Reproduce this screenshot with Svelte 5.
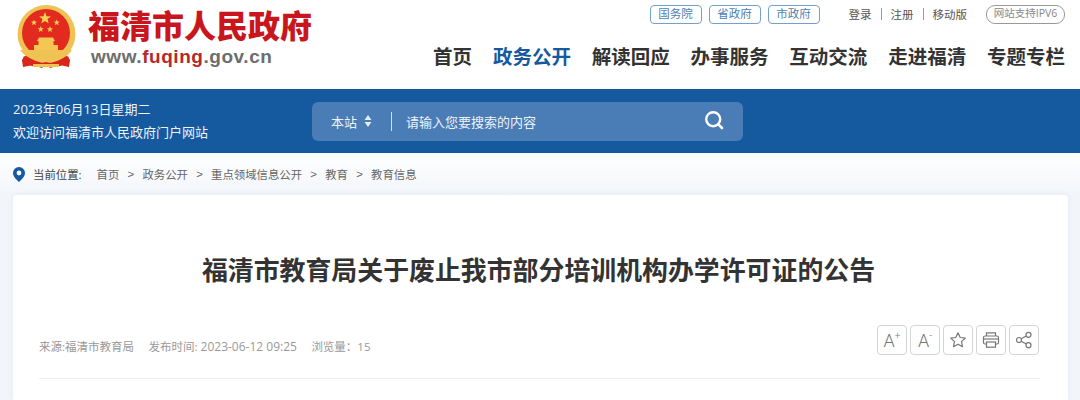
<script>
	const links = ['国务院', '省政府', '市政府'];
	const nav = ['首页', '政务公开', '解读回应', '办事服务', '互动交流', '走进福清', '专题专栏'];
	const crumbs = ['首页', '政务公开', '重点领域信息公开', '教育', '教育信息'];
	// emblem drawn in page pixels, see the viewBox below
	const smallStars = [
		[34, 22.7],
		[56.7, 22.7],
		[40.7, 29.3],
		[50, 29.3]
	];

	function star(cx, cy, r) {
		const pts = [];
		for (let i = 0; i < 10; i++) {
			const rad = i % 2 ? r * 0.42 : r;
			const a = (Math.PI / 5) * i - Math.PI / 2;
			pts.push(`${(cx + rad * Math.cos(a)).toFixed(2)},${(cy + rad * Math.sin(a)).toFixed(2)}`);
		}
		return pts.join(' ');
	}
</script>

<div class="page">
	<header class="top">
		<div class="brand">
			<svg class="emblem" viewBox="14 4 66 66" width="66" height="66" aria-hidden="true">
				<path d="M27 54 L22 60 L23 67 L33 65 L42 68 L46 64 L50 68 L60 65 L69 67 L70 60 L65 54 Z" fill="#d8261c" />
				<circle cx="46.5" cy="34" r="29" fill="#eec353" />
				<circle cx="46" cy="33" r="24" fill="#e22a1f" />
				<polygon points={star(45, 18.3, 6.2)} fill="#f6d250" />
				{#each smallStars as s}
					<polygon points={star(s[0], s[1], 3.2)} fill="#f6d250" />
				{/each}
				<path d="M37 41 L39 37.5 H53 L55 41 H53.5 V45 H58 V50 H34 V45 H38.5 V41 Z" fill="#f3c751" />
				<path d="M20 50 H72 Q66 60 46.5 63 Q27 60 20 50 Z" fill="#eec353" />
				<path d="M24 56 Q36 66 46 62 Q56 66 68 56 L70 61 Q58 70 46 65 Q34 70 22 61 Z" fill="#d8261c" />
				<rect x="33" y="64" width="26" height="3" fill="#eec353" />
			</svg>
			<div class="brand-text">
				<div class="brand-name">福清市人民政府</div>
				<div class="brand-url">www.<b>fuqing</b>.gov.cn</div>
			</div>
		</div>
		<div class="top-right">
			<div class="utility">
				<div class="gov-links">
					{#each links as l}
						<a href="#top" class="gov">{l}</a>
					{/each}
				</div>
				<div class="account">
					<a href="#top">登录</a>
					<i></i>
					<a href="#top">注册</a>
					<i></i>
					<a href="#top">移动版</a>
				</div>
				<span class="ipv6">网站支持IPV6</span>
			</div>
			<nav class="nav">
				{#each nav as item, i}
					<a href="#top" class:active={i === 1}>{item}</a>
				{/each}
			</nav>
		</div>
	</header>

	<section class="band">
		<div class="welcome">
			<div>2023年06月13日星期二</div>
			<div>欢迎访问福清市人民政府门户网站</div>
		</div>
		<div class="search">
			<span class="scope">本站</span>
			<svg class="updown" viewBox="0 0 8 12" width="8" height="12" aria-hidden="true">
				<path d="M4 0 L7.5 5 H0.5 Z M4 12 L0.5 7 H7.5 Z" fill="#e6edf5" />
			</svg>
			<span class="sep"></span>
			<span class="hint">请输入您要搜索的内容</span>
			<svg class="lens" viewBox="0 0 20 20" width="20" height="20" aria-hidden="true">
				<circle cx="9.2" cy="9.2" r="7" fill="none" stroke="#fff" stroke-width="2.4" />
				<path d="M14.4 14.4 L18 18" stroke="#fff" stroke-width="2.6" stroke-linecap="round" />
			</svg>
		</div>
	</section>

	<div class="crumbs">
		<svg viewBox="0 0 12 15" width="12" height="15" aria-hidden="true">
			<path
				fill-rule="evenodd"
				d="M6 0 A6 6 0 0 1 12 6 C12 10 8 13 6 15 C4 13 0 10 0 6 A6 6 0 0 1 6 0 Z M6 3.6 A2.4 2.4 0 1 0 6 8.4 A2.4 2.4 0 1 0 6 3.6 Z"
				fill="#15599f"
			/>
		</svg>
		<span class="here">当前位置:</span>
		{#each crumbs as c, i}
			{#if i > 0}<span class="arrow">&gt;</span>{/if}
			<a href="#top">{c}</a>
		{/each}
	</div>

	<main class="card">
		<h1>福清市教育局关于废止我市部分培训机构办学许可证的公告</h1>
		<div class="meta">
			<div class="info">
				<span>来源:福清市教育局</span>
				<span>发布时间: <span class="stamp">2023-06-12 09:25</span></span>
				<span>浏览量：15</span>
			</div>
			<div class="tools">
				<button aria-label="放大字体"><span class="aa">A</span><sup>+</sup></button>
				<button aria-label="缩小字体"><span class="aa">A</span><sup>-</sup></button>
				<button aria-label="收藏">
					<svg viewBox="0 0 18 18" width="18" height="18">
						<path
							d="M9 1.8 L11.2 6.5 L16.3 7.1 L12.5 10.6 L13.5 15.7 L9 13.2 L4.5 15.7 L5.5 10.6 L1.7 7.1 L6.8 6.5 Z"
							fill="none"
							stroke="#777"
							stroke-width="1.2"
							stroke-linejoin="round"
						/>
					</svg>
				</button>
				<button aria-label="打印">
					<svg viewBox="0 0 18 18" width="18" height="18" fill="none" stroke="#777" stroke-width="1.2">
						<path d="M4.5 5 V1.8 H13.5 V5" />
						<rect x="1.5" y="5" width="15" height="8" rx="1.5" />
						<path d="M1.5 8 H16.5" />
						<rect x="4.5" y="11" width="9" height="5.2" fill="#fff" />
					</svg>
				</button>
				<button aria-label="分享">
					<svg viewBox="0 0 18 18" width="18" height="18" fill="none" stroke="#777" stroke-width="1.2">
						<circle cx="4" cy="9" r="2.5" />
						<circle cx="13.5" cy="3.8" r="2.5" />
						<circle cx="13.5" cy="14.2" r="2.5" />
						<path d="M6.2 7.8 L11.3 5 M6.2 10.2 L11.3 13" />
					</svg>
				</button>
			</div>
		</div>
	</main>
</div>

<style>
	:global(body) {
		margin: 0;
		background: #fff;
	}
	.page {
		height: 400px;
		overflow: hidden;
		font-family: 'Open Sans', 'Noto Sans CJK SC', sans-serif;
		background: linear-gradient(#fff 153px, #f2f5fa 195px);
	}
	a {
		color: inherit;
		text-decoration: none;
	}

	.top {
		height: 89px;
		display: flex;
		justify-content: space-between;
		background: #fff;
	}
	.brand {
		display: flex;
		align-items: flex-start;
		padding: 4px 0 0 14px;
		gap: 8px;
	}
	.brand-text {
		padding-top: 2px;
	}
	.brand-name {
		font-size: 32px;
		line-height: 40px;
		font-weight: 900;
		color: #c9161d;
		width: 224px;
		white-space: nowrap;
	}
	.brand-url {
		font-family: 'Liberation Sans', sans-serif;
		font-size: 19px;
		line-height: 22px;
		font-weight: 700;
		letter-spacing: 0.55px;
		color: #6d6d6d;
		padding: 0 0 0 3px;
	}
	.brand-url b {
		color: #b32a2b;
	}

	.top-right {
		display: flex;
		flex-direction: column;
		align-items: flex-end;
		padding-right: 15px;
	}
	.utility {
		display: flex;
		align-items: center;
		height: 28px;
		font-size: 11.5px;
	}
	.gov-links {
		display: flex;
		gap: 7px;
		margin-right: 29px;
	}
	.gov {
		width: 50px;
		height: 17px;
		line-height: 15px;
		text-align: center;
		border: 1px solid #74a0cd;
		border-radius: 4px;
		color: #4f7fb3;
		font-size: 11.5px;
	}
	.account {
		display: flex;
		align-items: center;
		gap: 9px;
		color: #555;
		margin-right: 19px;
	}
	.account i {
		width: 1px;
		height: 12px;
		background: #cf9140;
	}
	.ipv6 {
		width: 77px;
		height: 17px;
		line-height: 15px;
		text-align: center;
		border: 1px solid #999;
		border-radius: 9px;
		color: #888;
		font-size: 10.5px;
		white-space: nowrap;
	}
	.nav {
		display: flex;
		gap: 20.8px;
		margin-top: 14px;
		font-size: 19.5px;
		line-height: 30px;
		font-weight: 700;
		color: #333;
		white-space: nowrap;
	}
	.nav .active {
		color: #15599f;
	}

	.band {
		height: 64px;
		background: #15599f;
		display: flex;
		align-items: center;
		padding-left: 13px;
		color: #fff;
	}
	.welcome {
		width: 299px;
		font-size: 13px;
		line-height: 23px;
		color: #eef3f9;
	}
	.search {
		width: 431px;
		height: 39px;
		box-sizing: border-box;
		background: #4a7cb5;
		border-radius: 6px;
		display: flex;
		align-items: center;
		padding: 0 19px;
		font-size: 13px;
		color: #eef3f9;
	}
	.updown {
		margin-left: 7px;
	}
	.sep {
		width: 1px;
		height: 19px;
		background: #d5e0ed;
		margin: 0 14px 0 19px;
	}
	.hint {
		flex: 1;
	}
	.lens {
		margin-top: -2px;
	}

	.crumbs {
		height: 42px;
		display: flex;
		align-items: center;
		padding-left: 13px;
		font-size: 11.4px;
		color: #666;
		box-sizing: border-box;
	}
	.here {
		margin: 0 15px 0 8px;
		color: #444;
	}
	.arrow {
		margin: 0 8.2px;
		font-family: 'Liberation Sans', sans-serif;
	}

	.card {
		margin: 0 12px 0 13px;
		height: 205px;
		box-sizing: border-box;
		background: #fff;
		padding: 0 28px 0 26px;
		border-radius: 4px 4px 0 0;
		box-shadow: 0 0 6px rgba(40, 80, 140, 0.06);
	}
	h1 {
		margin: 0;
		padding-top: 56px;
		font-size: 25.9px;
		line-height: 38px;
		font-weight: 700;
		color: #333;
		text-align: center;
		text-indent: -2px;
		white-space: nowrap;
	}
	.meta {
		margin-top: 36px;
		height: 53px;
		border-bottom: 1px solid #eee;
		display: flex;
		justify-content: space-between;
		align-items: flex-start;
	}
	.info {
		display: flex;
		gap: 14.5px;
		font-size: 11.5px;
		line-height: 34px;
		color: #999;
		padding-top: 5px;
	}
	.stamp {
		font-size: 12px;
	}
	.tools {
		display: flex;
		gap: 3px;
		margin-right: 1px;
	}
	.tools button {
		width: 30px;
		height: 30px;
		padding: 0;
		background: #fff;
		border: 1px solid #d4d4d4;
		border-radius: 4px;
		display: flex;
		align-items: center;
		justify-content: center;
		color: #777;
		font-family: Roboto, sans-serif;
		font-weight: 300;
	}
	.aa {
		font-size: 18px;
	}
	sup {
		font-size: 10px;
		line-height: 1;
		margin-top: -8px;
		vertical-align: baseline;
	}
</style>
